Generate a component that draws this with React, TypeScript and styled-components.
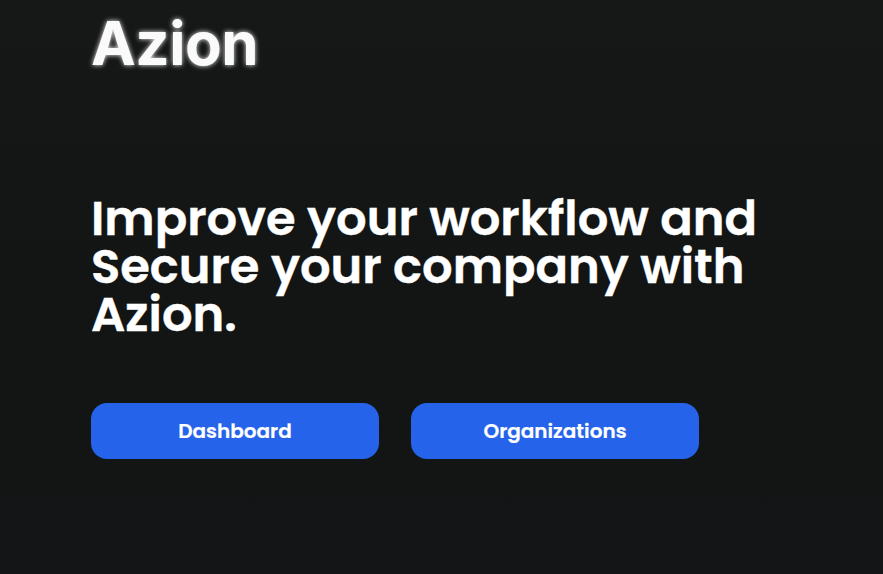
import React from "react";
import styled, { createGlobalStyle } from "styled-components";

const GlobalStyle = createGlobalStyle`
  * { box-sizing: border-box; }
  body { margin: 0; background: #131514; }
`;

const Page = styled.main`
  height: 574px;
  overflow: hidden;
  padding: 11px 0 0 91px;
  display: flex;
  flex-direction: column;
  align-items: flex-start;
  background: linear-gradient(#151817, #131514 50%, #131516);
  color: #fff;
  font-family: Poppins, Inter, "Open Sans", sans-serif;
`;

const Logo = styled.h1`
  margin: 0;
  height: 64px;
  color: #fafafa;
  font: 700 60px/64px Inter, sans-serif;
  letter-spacing: -0.5px;
  text-shadow: 0 0 5px rgba(255, 255, 255, 0.95);
`;

const Headline = styled.h2`
  margin: 120px 0 0;
  font-size: 48px;
  font-weight: 600;
  line-height: 48px;
  -webkit-text-stroke: 0.4px #fff;
`;

const Line = styled.span`
  display: block;
  white-space: nowrap;
`;

const Actions = styled.nav`
  display: flex;
  gap: 32px;
  margin-top: 64px;
`;

const Button = styled.button`
  width: 288px;
  height: 56px;
  border: 0;
  border-radius: 16px;
  padding: 0;
  background: #2563eb;
  color: #fff;
  font: 600 20px/28px Poppins, Inter, sans-serif;
  -webkit-text-stroke: 0.2px #fff;
`;

export default function App() {
  return (
    <>
      <GlobalStyle />
      <Page>
        <Logo>Azion</Logo>
        <Headline>
          <Line>Improve your workflow and</Line>
          <Line>Secure your company with</Line>
          <Line>Azion.</Line>
        </Headline>
        <Actions>
          <Button>Dashboard</Button>
          <Button>Organizations</Button>
        </Actions>
      </Page>
    </>
  );
}
